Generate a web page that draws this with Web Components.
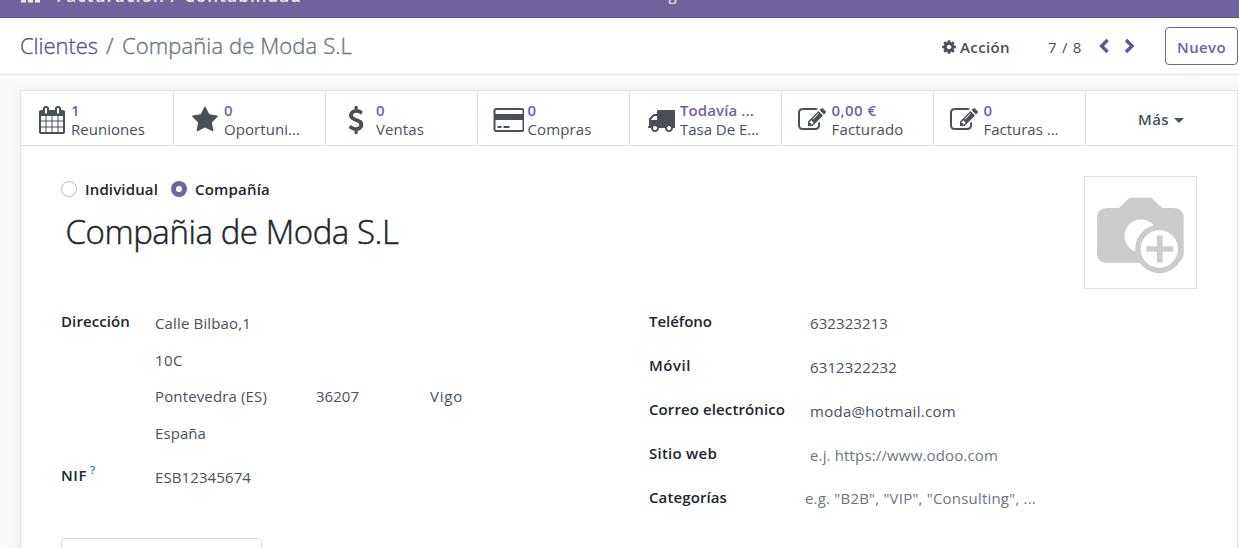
<!DOCTYPE html>
<html lang="es">
<head>
<meta charset="utf-8">
<title>Compañia de Moda S.L</title>
<style>
html,body{margin:0;height:548px;overflow:hidden}
body{font:400 15px/20px "Open Sans","Noto Sans",sans-serif;color:#495057;background:#f8f9fa}
</style>
</head>
<body>
<contact-page></contact-page>
<script>
const ICONS={
calendar:'M192 1664h288v-288h-288v288zm352 0h320v-288h-320v288zm-352-352h288v-320h-288v320zm352 0h320v-320h-320v320zm-352-384h288v-288h-288v288zm736 736h320v-288h-320v288zm-384-736h320v-288h-320v288zm768 736h288v-288h-288v288zm-384-352h320v-320h-320v320zm-352-864v-288q0-13-9.5-22.5t-22.5-9.5h-64q-13 0-22.5 9.5t-9.5 22.5v288q0 13 9.5 22.5t22.5 9.5h64q13 0 22.5-9.5t9.5-22.5zm736 864h288v-320h-288v320zm-384-384h320v-288h-320v288zm384 0h288v-288h-288v288zm32-480v-288q0-13-9.5-22.5t-22.5-9.5h-64q-13 0-22.5 9.5t-9.5 22.5v288q0 13 9.5 22.5t22.5 9.5h64q13 0 22.5-9.5t9.5-22.5zm384-64v1280q0 52-38 90t-90 38h-1408q-52 0-90-38t-38-90v-1280q0-52 38-90t90-38h128v-96q0-66 47-113t113-47h64q66 0 113 47t47 113v96h384v-96q0-66 47-113t113-47h64q66 0 113 47t47 113v96h128q52 0 90 38t38 90z',
star:'M1728 647q0 22-26 48l-363 354 86 500q1 7 1 20 0 21-10.5 35.5t-30.5 14.5q-19 0-40-12l-449-236-449 236q-22 12-40 12-21 0-31.5-14.5t-10.5-35.5q0-6 2-20l86-500-364-354q-25-27-25-48 0-37 56-46l502-73 225-455q19-41 49-41t49 41l225 455 502 73q56 9 56 46z',
usd:'M1362 1185q0 153-99.5 263.5t-258.5 136.5v175q0 14-9 23t-23 9h-135q-13 0-22.5-9.5t-9.5-22.5v-175q-66-9-127.5-31t-101.5-44.5-74-48-46.5-37.5-17.5-18q-17-21-2-41l103-135q7-10 23-12 15-2 24 9l2 2q113 99 243 125 37 8 74 8 81 0 142.5-43t61.5-122q0-28-15-53t-33.5-42-58.5-37.5-66-32-80-32.5q-39-16-61.5-25t-61.5-26.5-62.5-31-56.5-35.5-53.5-42.5-43.5-49-35.5-58-21-66.5-8.5-78q0-138 98-242t255-134v-180q0-13 9.5-22.5t22.5-9.5h135q14 0 23 9t9 23v176q57 6 110.5 23t87 33.5 63.5 37.5 39 29 15 14q17 18 5 38l-81 146q-8 15-23 16-14 3-27-7-3-3-14.5-12t-39-26.5-58.5-32-74.5-26-85.5-11.5q-95 0-155 43t-60 111q0 26 8.5 48t29.5 41.5 39.5 33 56 31 60.5 27 70 27.5q53 20 81 31.5t76 35 75.5 42.5 62 50 53 63.5 31.5 76.5 13 94z',
card:'M1792 128q66 0 113 47t47 113v1216q0 66-47 113t-113 47h-1664q-66 0-113-47t-47-113v-1216q0-66 47-113t113-47zm-1664 128q-13 0-22.500 9.500t-9.500 22.500v224h1728v-224q0-13-9.500-22.500t-22.500-9.500zm1664 1280q13 0 22.500-9.500t9.500-22.500v-608h-1728v608q0 13 9.500 22.500t22.500 9.500zm-1568-128v-128h256v128zm384 0v-128h384v128z',
truck:'M640 1408q0-52-38-90t-90-38-90 38-38 90 38 90 90 38 90-38 38-90zm-384-512h384v-256h-158q-13 0-22 9l-195 195q-9 9-9 22v30zm1280 512q0-52-38-90t-90-38-90 38-38 90 38 90 90 38 90-38 38-90zm256-1088v1024q0 15-4 26.5t-13.5 18.5-16.5 11.5-23.5 6-22.500 2-25.5 0-22.500-.5q0 106-75 181t-181 75-181-75-75-181h-384q0 106-75 181t-181 75-181-75-75-181h-64q-3 0-22.500.5t-25.5 0-22.500-2-23.500-6-16.500-11.500-13.500-18.500-4-26.500q0-26 19-45t45-19v-320q0-8-.5-35t0-38 2.500-34.500 6.500-37 14-30.500 22.500-30l198-198q19-19 50.500-32t58.500-13h160v-192q0-26 19-45t45-19h1024q26 0 45 19t19 45z',
edit:'M888 1184l116-116-152-152-116 116v56h96v96h56zm440-720q-16-16-33 1l-350 350q-17 17-1 33t33-1l350-350q17-17 1-33zm80 594v190q0 119-84.5 203.5t-203.5 84.5h-832q-119 0-203.5-84.5t-84.5-203.5v-832q0-119 84.5-203.5t203.5-84.5h832q63 0 117 25 15 7 18 23 3 17-9 29l-49 49q-14 14-32 8-23-6-45-6h-832q-66 0-113 47t-47 113v832q0 66 47 113t113 47h832q66 0 113-47t47-113v-126q0-13 9-22l64-64q15-15 35-7t20 29zm-96-738l288 288-672 672h-288v-288zm444 132l-92 92-288-288 92-92q28-28 68-28t68 28l152 152q28 28 28 68t-28 68z',
cog:'M1152 896q0-106-75-181t-181-75-181 75-75 181 75 181 181 75 181-75 75-181zm512-109v222q0 12-8 23t-20 13l-185 28q-19 54-39 91 35 50 107 138 10 12 10 25t-9 23q-27 37-99 108t-94 71q-12 0-26-9l-138-108q-44 23-91 38-16 136-29 186-7 28-36 28h-222q-14 0-24.5-8.5t-11.5-21.5l-28-184q-49-16-90-37l-141 107q-10 9-25 9-14 0-25-11-126-114-165-168-7-10-7-23 0-12 8-23 15-21 51-66.5t54-70.5q-27-50-41-99l-183-27q-13-2-21-12.5t-8-23.5v-222q0-12 8-23t19-13l186-28q14-46 39-92-40-57-107-138-10-12-10-24 0-10 9-23 26-36 98.500-107.500t94.500-71.500q13 0 26 10l138 107q44-23 91-38 16-136 29-186 7-28 36-28h222q14 0 24.500 8.500t11.500 21.500l28 184q49 16 90 37l142-107q9-9 24-9 13 0 25 10 129 119 165 170 7 8 7 22 0 12-8 23-15 21-51 66.500t-54 70.500q26 50 41 98l183 28q13 2 21 12.500t8 23.500z'
};
function define(name,html,after){
  customElements.define(name,class extends HTMLElement{
    constructor(){super();this.attachShadow({mode:'open'});}
    connectedCallback(){
      this.shadowRoot.innerHTML=typeof html==='function'?html(this):html;
      if(after)after(this);
    }
  });
}
/* Single-line text, tracked so that it spans exactly `w` pixels. */
define('fit-text','<style>:host{display:block;white-space:nowrap;flex:none}span{display:inline-block}</style><span><slot></slot></span>',el=>{
  const w=+el.getAttribute('w');
  if(!w)return;
  el.style.width=w+'px';
  const s=el.shadowRoot.querySelector('span');
  s.style.letterSpacing=(w-s.getBoundingClientRect().width)/el.textContent.length+'px';
});
define('fa-icon',el=>{
  const n=el.getAttribute('name'),s=+el.getAttribute('size')||28;
  const wide=n==='card';
  return `<style>:host{display:block;flex:none}svg{display:block;fill:currentColor}</style><svg width="${wide?s*2016/1792:s}" height="${s}" viewBox="${wide?'-64 0 2016 1792':'0 0 1792 1792'}"><path d="${ICONS[n]}" fill-rule="${wide||n==='calendar'?'evenodd':'nonzero'}"/></svg>`;
});
define('top-bar',`<style>
:host{display:flex;height:17px;background:#71639e;border-bottom:1px solid #5a4f7f;color:#f1eff5;overflow:hidden;box-sizing:content-box}
svg{display:block;margin-left:21px;flex:none}
.brand{margin:-14px 0 0 15px;font-weight:600;font-size:17px;line-height:20px}
.menu{margin:-16px 0 0 330px}
</style><svg width="20" height="3" fill="#f1eff5"><path d="M0 0h5v2.500H0zM7 0h5v2.500H7zM14 0h5v2.500h-5z"/></svg><fit-text class="brand" w="246">Facturación / Contabilidad</fit-text><fit-text class="menu">Configuración</fit-text>`);
define('control-panel',`<style>
:host{display:flex;height:56px;background:#fff;border-bottom:1px solid #dee2e6;padding:0 1px 0 20px}
.crumbs{display:flex;gap:8px;margin-top:12px;font-size:22px;font-weight:300;-webkit-text-stroke:.35px;line-height:30px;color:#6c757d;flex:1}
.link{color:#5f5288}
.act{display:flex;margin-top:19px;font-weight:600}
.act fa-icon{margin:2px 3px 0 0}
.pager{margin:19px 17px 0 38px}
.chev{display:block;margin:20px 28px 0 0;flex:none}
button{box-sizing:border-box;width:73px;height:38px;margin:9px 0 0;padding:1px 0 0 11px;border:1px solid #71639e;border-radius:4px;background:#fff;color:#71639e;font:inherit;font-weight:600;text-align:left}
</style>
<div class="crumbs"><fit-text class="link" w="78">Clientes</fit-text><fit-text w="8">/</fit-text><fit-text w="230">Compañia de Moda S.L</fit-text></div>
<div class="act"><fa-icon name="cog" size="16"></fa-icon><fit-text w="50">Acción</fit-text></div>
<fit-text class="pager" w="34">7 / 8</fit-text>
<svg class="chev" width="38" height="16" fill="none" stroke="#64568e" stroke-width="3.400"><path d="M8.600 2 2.600 8l6 6M27 2l6 6-6 6"/></svg>
<button><fit-text w="49">Nuevo</fit-text></button>`);
define('stat-button',`<style>
:host{display:flex;box-sizing:border-box;height:54px;border-right:1px solid #dee2e6}
::slotted(fa-icon){margin-top:15px}
.txt{display:flex;flex-direction:column;padding-top:9px;margin-left:var(--gap,5px)}
::slotted([slot=value]){color:#71639e;font-weight:600;height:19px}
</style><slot name="icon"></slot><div class="txt"><slot name="value"></slot><slot name="label"></slot></div>`);
define('more-button',`<style>:host{display:flex;align-items:center;padding:2px 0 0 52px;height:51px;font-weight:600}
i{border:5px solid transparent;border-top-color:#495057;border-bottom:0;margin:4px 0 0 5px}</style><fit-text w="31">Más</fit-text><i></i>`);
define('radio-option',el=>`<style>:host{display:flex;align-items:center;font-weight:600;color:#212529}
i{box-sizing:border-box;width:16px;height:16px;border-radius:50%;background:#fff;border:${el.hasAttribute('checked')?'5px solid #71639e':'1px solid #b8bcc0'};margin:0 8px 1px 0}</style><i></i><slot></slot>`);
define('field-label',`<style>:host{display:flex;font-weight:600;color:#212529;height:20px}</style><slot></slot>`);
define('avatar-placeholder',`<style>:host{display:block;width:111px;height:111px;border:1px solid #dee2e6}svg{display:block}</style>
<svg width="111" height="111" viewBox="1 1 111 111"><path fill="#ccc" d="M35 32 45.500 21.700h22L78 32h12q9.700 0 9.700 10v35q0 9.700-10 9.700H23q-10 0-10-10V42q0-10 10-10z"/><circle cx="57" cy="60" r="16.500" fill="#fff"/><circle cx="75.300" cy="73" r="21.400" fill="#fff" stroke="#ccc" stroke-width="5.500"/><path d="M62.300 73h27M75.800 59.500v27" stroke="#ccc" stroke-width="5.600"/></svg>`);
define('contact-sheet',`<style>
:host{display:block;box-sizing:border-box;width:1218px;height:480px;margin:15px 0 0 20px;background:#fff;border:1px solid #dee2e6;box-shadow:0 0 14px rgba(0,0,0,.045)}
.stats{display:grid;grid-template-columns:153px repeat(6,152px) 151px;border-bottom:1px solid #dee2e6;height:54px}
.head{display:flex;justify-content:space-between;padding:30px 40px 0 40px;height:113px}
.radios{display:flex;gap:13px;padding-top:3px;height:20px}
h1{margin:10px 0 0 4.500px;font-weight:300;-webkit-text-stroke:.45px;font-size:33px;line-height:46px;color:#212529}
.groups{display:grid;grid-template-columns:588px 1fr;padding:22px 40px 0;height:227px}
.g{display:grid;align-content:start}
.a{grid-template-columns:94px 1fr;grid-template-rows:37px 36px 37px 44px 20px}
.b{grid-template-columns:161px 1fr;grid-auto-rows:44px}
.v{padding-top:2px;display:flex}
.a .v{grid-column:2}
.h{color:#6c757d}
.q{font-size:11.500px;color:#1281a8;margin:-5px 0 0 3px}
.tab{width:199px;height:20px;border:1px solid #dee2e6;border-radius:4px 4px 0 0;margin:0 0 0 40px}
</style>
<div class="stats">
<stat-button style="padding-left:17px"><fa-icon slot="icon" name="calendar"></fa-icon><fit-text slot="value">1</fit-text><fit-text slot="label" w="74">Reuniones</fit-text></stat-button>
<stat-button style="padding-left:17px"><fa-icon slot="icon" name="star"></fa-icon><fit-text slot="value">0</fit-text><fit-text slot="label" w="76">Oportuni...</fit-text></stat-button>
<stat-button style="padding-left:16px;--gap:6px"><fa-icon slot="icon" name="usd"></fa-icon><fit-text slot="value">0</fit-text><fit-text slot="label" w="48">Ventas</fit-text></stat-button>
<stat-button style="padding-left:14.500px;--gap:3.500px"><fa-icon slot="icon" name="card"></fa-icon><fit-text slot="value">0</fit-text><fit-text slot="label" w="64">Compras</fit-text></stat-button>
<stat-button style="padding-left:17px;--gap:5px"><fa-icon slot="icon" name="truck"></fa-icon><fit-text slot="value" w="74">Todavía ...</fit-text><fit-text slot="label" w="79">Tasa De E...</fit-text></stat-button>
<stat-button style="padding-left:16px;--gap:5.500px"><fa-icon slot="icon" name="edit"></fa-icon><fit-text slot="value" w="45">0,00 €</fit-text><fit-text slot="label" w="72">Facturado</fit-text></stat-button>
<stat-button style="padding-left:16px;--gap:5.500px"><fa-icon slot="icon" name="edit"></fa-icon><fit-text slot="value">0</fit-text><fit-text slot="label" w="75">Facturas ...</fit-text></stat-button>
<more-button></more-button>
</div>
<div class="head"><div><div class="radios"><radio-option><fit-text w="73">Individual</fit-text></radio-option><radio-option checked><fit-text w="75">Compañía</fit-text></radio-option></div><h1><fit-text w="333">Compañia de Moda S.L</fit-text></h1></div><avatar-placeholder></avatar-placeholder></div>
<div class="groups">
<div class="g a">
<field-label><fit-text w="69">Dirección</fit-text></field-label><div class="v"><fit-text w="96">Calle Bilbao,1</fit-text></div>
<div class="v"><fit-text w="28">10C</fit-text></div>
<div class="v"><fit-text w="112">Pontevedra (ES)</fit-text><fit-text w="43" style="margin-left:49px">36207</fit-text><fit-text w="33" style="margin-left:71px">Vigo</fit-text></div>
<div class="v"><fit-text w="51">España</fit-text></div>
<field-label><fit-text w="26">NIF</fit-text><span class="q">?</span></field-label><div class="v"><fit-text w="96">ESB12345674</fit-text></div>
</div>
<div class="g b">
<field-label><fit-text w="63">Teléfono</fit-text></field-label><div class="v"><fit-text w="78">632323213</fit-text></div>
<field-label><fit-text w="42">Móvil</fit-text></field-label><div class="v"><fit-text w="87">6312322232</fit-text></div>
<field-label><fit-text w="136">Correo electrónico</fit-text></field-label><div class="v"><fit-text w="146">moda@hotmail.com</fit-text></div>
<field-label><fit-text w="68">Sitio web</fit-text></field-label><div class="v h"><fit-text w="188">e.j. https://www.odoo.com</fit-text></div>
<field-label><fit-text w="78">Categorías</fit-text></field-label><div class="v h" style="margin:-1px 0 0 -5px"><fit-text w="231">e.g. "B2B", "VIP", "Consulting", ...</fit-text></div>
</div></div>
<div class="tab"></div>`);
define('contact-page',`<style>:host{display:block;width:1239px;height:548px;overflow:hidden;background:#f8f9fa}</style><top-bar></top-bar><control-panel></control-panel><contact-sheet></contact-sheet>`);
</script>
</body>
</html>
